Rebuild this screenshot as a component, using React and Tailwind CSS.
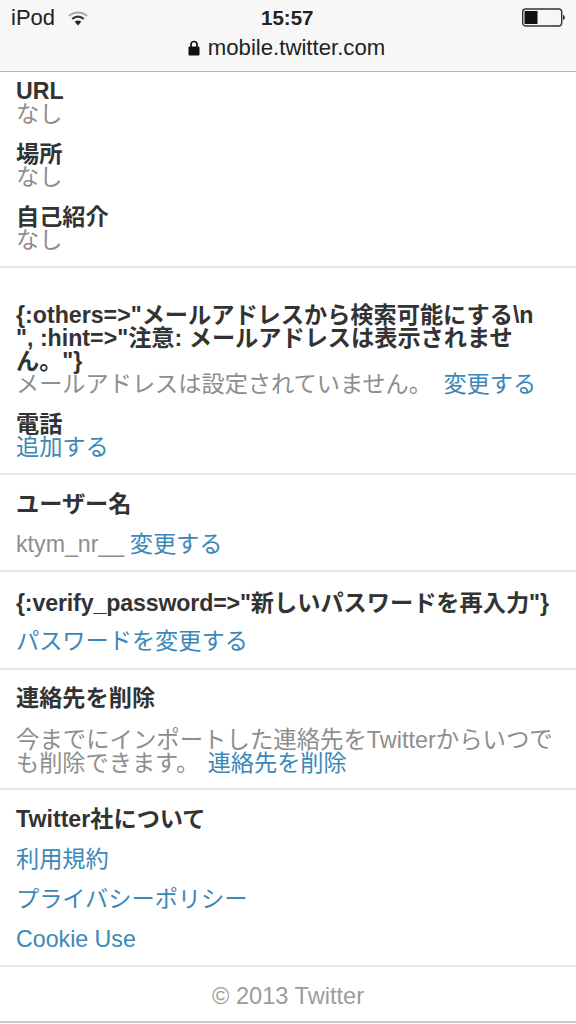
function Label({ children }) {
  return <div className="font-bold text-[#333333] leading-[23px]">{children}</div>
}

function Muted({ children }) {
  return <div className="text-[#8e8e8e] leading-[23px]">{children}</div>
}

function A({ children, className = '' }) {
  return <span className={`text-[#3b88b8] ${className}`}>{children}</span>
}

function Section({ className = '', children }) {
  return <section className={`border-b-2 border-[#e8e8e8] px-4 ${className}`}>{children}</section>
}

function StatusBar() {
  return (
    <header className="h-[72px] bg-[#f7f7f7] border-b border-[#b4b4b4] text-[#222222]">
      <div className="h-9 flex items-center justify-between pl-[11px] pr-[10px] relative">
        <div className="flex items-center gap-[13px]">
          <span className="text-[22px] leading-none">iPod</span>
          <svg width="20" height="17" viewBox="0 0 20 16">
            <path d="M1 5.5C6 .8 14 .8 19 5.5" fill="none" stroke="#a8a8a8" strokeWidth="2.2" />
            <path d="M4.2 8.5C7.6 5.4 12.4 5.4 15.8 8.5" fill="none" stroke="#333" strokeWidth="2.2" />
            <path d="M10 15l-3.3-3.7c2-1.6 4.6-1.6 6.6 0z" fill="#222" />
          </svg>
        </div>
        <span className="absolute left-[261px] top-[3px] text-[20.5px] font-bold">15:57</span>
        <svg width="44" height="20" viewBox="0 0 44 20">
          <rect x="0.7" y="1" width="39" height="17" rx="3" fill="none" stroke="#333" strokeWidth="1.4" />
          <rect x="2.5" y="3" width="13" height="13" fill="#111" />
          <path d="M41 7c2.4 0 2.4 5 0 5z" fill="#333" />
        </svg>
      </div>
      <div className="flex items-center justify-center gap-[8px] leading-6 pr-[3px]">
        <svg width="12" height="16" viewBox="0 0 12 16">
          <path d="M3 7V4.5a3 3 0 0 1 6 0V7" fill="none" stroke="#111" strokeWidth="1.7" />
          <rect x="0.5" y="6.5" width="11" height="9" rx="1" fill="#111" />
        </svg>
        <span className="text-[22.2px]">mobile.twitter.com</span>
      </div>
    </header>
  )
}

export default function App() {
  return (
    <div
      className="w-[576px] h-[1024px] overflow-hidden bg-white text-[23.2px]"
      style={{ fontFamily: '"Liberation Sans", "Noto Sans CJK JP", sans-serif' }}
    >
      <StatusBar />

      <Section className="pt-[8px] pb-[14px] flex flex-col gap-[17px]">
        <div>
          <Label>URL</Label>
          <Muted>なし</Muted>
        </div>
        <div>
          <Label>場所</Label>
          <Muted>なし</Muted>
        </div>
        <div>
          <Label>自己紹介</Label>
          <Muted>なし</Muted>
        </div>
      </Section>

      <Section className="pt-[36px] pb-[14px]">
        <Label>
          {'{:others=>"メールアドレスから検索可能にする\\n'}
          <br />
          {'", :hint=>"注意: メールアドレスは表示されませ'}
          <br />
          {'ん。"}'}
        </Label>
        <div className="leading-[23px] text-[#8e8e8e] whitespace-nowrap">
          メールアドレスは設定されていません。 <A className="ml-[5px]">変更する</A>
        </div>
        <div className="mt-[17px]">
          <Label>電話</Label>
          <div className="leading-[23px]"><A>追加する</A></div>
        </div>
      </Section>

      <Section className="pt-[18px] pb-[14px]">
        <Label>ユーザー名</Label>
        <div className="mt-[17px] leading-[23px] text-[#8e8e8e]">
          ktym_nr__ <A className="-ml-px">変更する</A>
        </div>
      </Section>

      <Section className="pt-[20px] pb-[15px]">
        <div className="font-bold text-[#333333] leading-[23px] whitespace-nowrap">
          <span className="tracking-[-0.15px]">{'{:verify_password=>"'}</span>
          {'新しいパスワードを再入力"}'}
        </div>
        <div className="mt-[15px] leading-[23px]"><A>パスワードを変更する</A></div>
      </Section>

      <Section className="pt-[17px] pb-[13px]">
        <Label>連絡先を削除</Label>
        <div className="mt-[19px] leading-[23px] text-[#8e8e8e]">
          <span className="text-[23.4px]">今までにインポートした連絡先をTwitterからいつで</span>
          <br />
          も削除できます。 <A className="ml-[2px]">連絡先を削除</A>
        </div>
      </Section>

      <Section className="pt-[18px] pb-[14px]">
        <Label>Twitter社について</Label>
        <div className="mt-[17px] flex flex-col gap-[17px] leading-[23px]">
          <A>利用規約</A>
          <A>プライバシーポリシー</A>
          <A>Cookie Use</A>
        </div>
      </Section>

      <footer className="h-[56px] pt-[6px] border-b-2 border-[#c8c8c8] flex items-center justify-center text-[#9c9c9c] text-[23.6px]">
        © 2013 Twitter
      </footer>
    </div>
  )
}
